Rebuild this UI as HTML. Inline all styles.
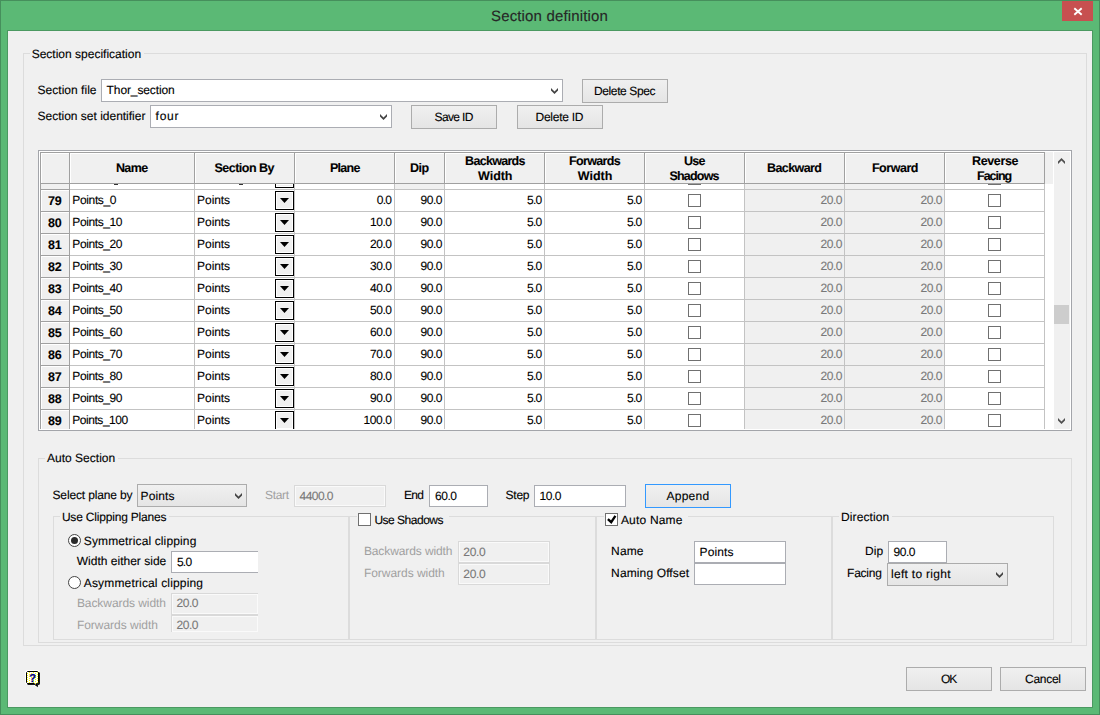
<!DOCTYPE html>
<html lang="en"><head><meta charset="utf-8"><title>Section definition</title>
<style>
html,body{margin:0;padding:0;}
body{width:1100px;height:715px;position:relative;overflow:hidden;background:#5bb975;font-family:"Liberation Sans", sans-serif;font-size:12px;}
.b{position:absolute;box-sizing:content-box;}
.t{position:absolute;white-space:nowrap;text-rendering:geometricPrecision;-webkit-text-stroke:0.12px currentColor;line-height:16px;font-size:12px;color:#000;}
</style></head>
<body>
<div class="b" style="left:0px;top:0px;width:1098px;height:713px;border:1px solid #468f5c;background:#5bb975;"></div>
<div class="b" style="left:7px;top:30px;width:1084px;height:676px;border:1px solid #4b9961;background:#f0f0f0;"></div>
<div class="b" style="left:1062px;top:1px;width:31px;height:20px;background:#c75050;"><svg width="31" height="20" viewBox="0 0 31 20" style="position:absolute;left:0;top:0"><path d="M12.3 7.2 L19.7 13.8 M19.7 7.2 L12.3 13.8" stroke="#fff" stroke-width="1.9" fill="none"/></svg></div>
<div class="b" style="left:23px;top:53px;width:1062px;height:591px;border:1px solid #dcdcdc;"></div>
<div class="b" style="left:38px;top:458px;width:1032px;height:183px;border:1px solid #dcdcdc;"></div>
<div class="b" style="left:53px;top:516px;width:294px;height:122px;border:1px solid #dcdcdc;"></div>
<div class="b" style="left:349px;top:516px;width:245px;height:122px;border:1px solid #dcdcdc;"></div>
<div class="b" style="left:596px;top:516px;width:234px;height:122px;border:1px solid #dcdcdc;"></div>
<div class="b" style="left:832px;top:516px;width:220px;height:122px;border:1px solid #dcdcdc;"></div>
<div class="b" style="left:30px;top:53px;width:114px;height:1px;background:#f0f0f0;"></div>
<div class="b" style="left:45px;top:458px;width:73px;height:1px;background:#f0f0f0;"></div>
<div class="b" style="left:60px;top:516px;width:109px;height:1px;background:#f0f0f0;"></div>
<div class="b" style="left:357px;top:516px;width:92px;height:1px;background:#f0f0f0;"></div>
<div class="b" style="left:604px;top:516px;width:84px;height:1px;background:#f0f0f0;"></div>
<div class="b" style="left:839px;top:516px;width:53px;height:1px;background:#f0f0f0;"></div>
<div class="b" style="left:101px;top:79px;width:460px;height:21px;border:1px solid #abadb3;background:#fff;"><svg width="7" height="6" viewBox="0 0 7 6" style="position:absolute;right:4px;top:8px"><path d="M0 0 L3.5 3.5 L7 0 L7 2.5 L3.5 6 L0 2.5 Z" fill="#444"/></svg></div>
<div class="b" style="left:150px;top:105px;width:240px;height:21px;border:1px solid #abadb3;background:#fff;"><svg width="7" height="6" viewBox="0 0 7 6" style="position:absolute;right:4px;top:8px"><path d="M0 0 L3.5 3.5 L7 0 L7 2.5 L3.5 6 L0 2.5 Z" fill="#444"/></svg></div>
<div class="b" style="left:582px;top:79px;width:84px;height:22px;border:1px solid #acacac;background:linear-gradient(#f0f0f0,#e5e5e5);"></div>
<div class="b" style="left:411px;top:105px;width:84px;height:22px;border:1px solid #acacac;background:linear-gradient(#f0f0f0,#e5e5e5);"></div>
<div class="b" style="left:517px;top:105px;width:84px;height:22px;border:1px solid #acacac;background:linear-gradient(#f0f0f0,#e5e5e5);"></div>
<div class="b" style="left:906px;top:667px;width:84px;height:22px;border:1px solid #acacac;background:linear-gradient(#f0f0f0,#e5e5e5);"></div>
<div class="b" style="left:1000px;top:667px;width:84px;height:22px;border:1px solid #acacac;background:linear-gradient(#f0f0f0,#e5e5e5);"></div>
<div class="b" style="left:645px;top:484px;width:84px;height:22px;border:1px solid #3399ff;background:linear-gradient(#f0f0f0,#e5e5e5);"></div>
<div class="b" style="left:137px;top:484px;width:108px;height:21px;border:1px solid #acacac;background:linear-gradient(#f0f0f0,#e5e5e5);"><svg width="7" height="6" viewBox="0 0 7 6" style="position:absolute;right:4px;top:8px"><path d="M0 0 L3.5 3.5 L7 0 L7 2.5 L3.5 6 L0 2.5 Z" fill="#444"/></svg></div>
<div class="b" style="left:887px;top:563px;width:119px;height:21px;border:1px solid #acacac;background:linear-gradient(#f0f0f0,#e5e5e5);"><svg width="7" height="6" viewBox="0 0 7 6" style="position:absolute;right:4px;top:8px"><path d="M0 0 L3.5 3.5 L7 0 L7 2.5 L3.5 6 L0 2.5 Z" fill="#444"/></svg></div>
<div class="b" style="left:294px;top:485px;width:90px;height:20px;border:1px solid #d9d9d9;background:#f0f0f0;box-shadow:inset 0 0 0 1px #fafafa;"></div>
<div class="b" style="left:429px;top:485px;width:57px;height:20px;border:1px solid #abadb3;background:#fff;"></div>
<div class="b" style="left:534px;top:485px;width:90px;height:20px;border:1px solid #abadb3;background:#fff;"></div>
<div class="b" style="left:171px;top:551px;width:86px;height:20px;border:1px solid #abadb3;background:#fff;border-right:none;"></div>
<div class="b" style="left:171px;top:593px;width:86px;height:20px;border:1px solid #d9d9d9;background:#f0f0f0;box-shadow:inset 0 0 0 1px #fafafa;border-right:none;"></div>
<div class="b" style="left:171px;top:615px;width:86px;height:16px;border:1px solid #d9d9d9;background:#f0f0f0;box-shadow:inset 0 0 0 1px #fafafa;border-right:none;border-bottom:none;"></div>
<div class="b" style="left:458px;top:541px;width:90px;height:20px;border:1px solid #d9d9d9;background:#f0f0f0;box-shadow:inset 0 0 0 1px #fafafa;"></div>
<div class="b" style="left:458px;top:563px;width:90px;height:20px;border:1px solid #d9d9d9;background:#f0f0f0;box-shadow:inset 0 0 0 1px #fafafa;"></div>
<div class="b" style="left:694px;top:541px;width:90px;height:20px;border:1px solid #abadb3;background:#fff;"></div>
<div class="b" style="left:694px;top:563px;width:90px;height:20px;border:1px solid #abadb3;background:#fff;"></div>
<div class="b" style="left:888px;top:541px;width:57px;height:20px;border:1px solid #abadb3;background:#fff;"></div>
<div class="b" style="left:358px;top:513px;width:11px;height:11px;border:1px solid #707070;background:#fff;"></div>
<div class="b" style="left:605px;top:513px;width:11px;height:11px;border:1px solid #707070;background:#fff;"><svg width="11" height="11" viewBox="0 0 11 11" style="position:absolute;left:0;top:0"><path d="M1.9 5.1 L5.2 8.2 L9.4 1.9" stroke="#000" stroke-width="2.3" fill="none"/></svg></div>
<div class="b" style="left:68px;top:534px;width:11px;height:11px;border:1px solid #444;border-radius:50%;background:#fff;"><div style="position:absolute;left:2px;top:2px;width:7px;height:7px;border-radius:50%;background:#2b2b2b"></div></div>
<div class="b" style="left:68px;top:576px;width:11px;height:11px;border:1px solid #444;border-radius:50%;background:#fff;"></div>
<div class="b" style="left:38px;top:150px;width:1032px;height:279px;border:1px solid #a3a5aa;background:#fff;"></div>
<div class="b" style="left:40px;top:152px;width:1013px;height:32px;background:#f0f0f0;"></div>
<div class="b" style="left:40px;top:184px;width:30px;height:245px;background:#f0f0f0;"></div>
<div class="b" style="left:745px;top:184px;width:199px;height:245px;background:#f0f0f0;"></div>
<div class="b" style="left:395px;top:184px;width:49px;height:5px;background:#f0f0f0;"></div>
<div class="b" style="left:1054px;top:152px;width:16px;height:277px;background:#f0f0f0;"></div>
<div class="b" style="left:1054px;top:305px;width:15px;height:19px;background:#cdcdcd;"></div>
<svg class="b" width="7" height="6" viewBox="0 0 7 6" style="left:1058px;top:158px"><path d="M0 6 L3.5 2.5 L7 6 L7 3.5 L3.5 0 L0 3.5 Z" fill="#505050"/></svg>
<svg class="b" width="7" height="6" viewBox="0 0 7 6" style="left:1058px;top:418px"><path d="M0 0 L3.5 3.5 L7 0 L7 2.5 L3.5 6 L0 2.5 Z" fill="#505050"/></svg>
<div class="b" style="left:40px;top:189px;width:1005px;height:1px;background:#c3c3c3;"></div>
<div class="b" style="left:40px;top:211px;width:1005px;height:1px;background:#c3c3c3;"></div>
<div class="b" style="left:40px;top:233px;width:1005px;height:1px;background:#c3c3c3;"></div>
<div class="b" style="left:40px;top:255px;width:1005px;height:1px;background:#c3c3c3;"></div>
<div class="b" style="left:40px;top:277px;width:1005px;height:1px;background:#c3c3c3;"></div>
<div class="b" style="left:40px;top:299px;width:1005px;height:1px;background:#c3c3c3;"></div>
<div class="b" style="left:40px;top:321px;width:1005px;height:1px;background:#c3c3c3;"></div>
<div class="b" style="left:40px;top:343px;width:1005px;height:1px;background:#c3c3c3;"></div>
<div class="b" style="left:40px;top:365px;width:1005px;height:1px;background:#c3c3c3;"></div>
<div class="b" style="left:40px;top:387px;width:1005px;height:1px;background:#c3c3c3;"></div>
<div class="b" style="left:40px;top:409px;width:1005px;height:1px;background:#c3c3c3;"></div>
<div class="b" style="left:40px;top:184px;width:1px;height:245px;background:#c3c3c3;"></div>
<div class="b" style="left:69px;top:184px;width:1px;height:245px;background:#c3c3c3;"></div>
<div class="b" style="left:194px;top:184px;width:1px;height:245px;background:#c3c3c3;"></div>
<div class="b" style="left:294px;top:184px;width:1px;height:245px;background:#c3c3c3;"></div>
<div class="b" style="left:394px;top:184px;width:1px;height:245px;background:#c3c3c3;"></div>
<div class="b" style="left:444px;top:184px;width:1px;height:245px;background:#c3c3c3;"></div>
<div class="b" style="left:544px;top:184px;width:1px;height:245px;background:#c3c3c3;"></div>
<div class="b" style="left:644px;top:184px;width:1px;height:245px;background:#c3c3c3;"></div>
<div class="b" style="left:744px;top:184px;width:1px;height:245px;background:#c3c3c3;"></div>
<div class="b" style="left:844px;top:184px;width:1px;height:245px;background:#c3c3c3;"></div>
<div class="b" style="left:944px;top:184px;width:1px;height:245px;background:#c3c3c3;"></div>
<div class="b" style="left:1044px;top:184px;width:1px;height:245px;background:#c3c3c3;"></div>
<div class="b" style="left:40px;top:152px;width:1005px;height:1px;background:#a0a0a0;"></div>
<div class="b" style="left:40px;top:183px;width:1005px;height:1px;background:#a0a0a0;"></div>
<div class="b" style="left:40px;top:152px;width:1px;height:32px;background:#a0a0a0;"></div>
<div class="b" style="left:69px;top:152px;width:1px;height:32px;background:#a0a0a0;"></div>
<div class="b" style="left:194px;top:152px;width:1px;height:32px;background:#a0a0a0;"></div>
<div class="b" style="left:294px;top:152px;width:1px;height:32px;background:#a0a0a0;"></div>
<div class="b" style="left:394px;top:152px;width:1px;height:32px;background:#a0a0a0;"></div>
<div class="b" style="left:444px;top:152px;width:1px;height:32px;background:#a0a0a0;"></div>
<div class="b" style="left:544px;top:152px;width:1px;height:32px;background:#a0a0a0;"></div>
<div class="b" style="left:644px;top:152px;width:1px;height:32px;background:#a0a0a0;"></div>
<div class="b" style="left:744px;top:152px;width:1px;height:32px;background:#a0a0a0;"></div>
<div class="b" style="left:844px;top:152px;width:1px;height:32px;background:#a0a0a0;"></div>
<div class="b" style="left:944px;top:152px;width:1px;height:32px;background:#a0a0a0;"></div>
<div class="b" style="left:1044px;top:152px;width:1px;height:32px;background:#a0a0a0;"></div>
<div class="b" style="left:41px;top:153px;width:28px;height:1px;background:#fff;"></div>
<div class="b" style="left:41px;top:153px;width:1px;height:30px;background:#fff;"></div>
<div class="b" style="left:70px;top:153px;width:124px;height:1px;background:#fff;"></div>
<div class="b" style="left:70px;top:153px;width:1px;height:30px;background:#fff;"></div>
<div class="b" style="left:195px;top:153px;width:99px;height:1px;background:#fff;"></div>
<div class="b" style="left:195px;top:153px;width:1px;height:30px;background:#fff;"></div>
<div class="b" style="left:295px;top:153px;width:99px;height:1px;background:#fff;"></div>
<div class="b" style="left:295px;top:153px;width:1px;height:30px;background:#fff;"></div>
<div class="b" style="left:395px;top:153px;width:49px;height:1px;background:#fff;"></div>
<div class="b" style="left:395px;top:153px;width:1px;height:30px;background:#fff;"></div>
<div class="b" style="left:445px;top:153px;width:99px;height:1px;background:#fff;"></div>
<div class="b" style="left:445px;top:153px;width:1px;height:30px;background:#fff;"></div>
<div class="b" style="left:545px;top:153px;width:99px;height:1px;background:#fff;"></div>
<div class="b" style="left:545px;top:153px;width:1px;height:30px;background:#fff;"></div>
<div class="b" style="left:645px;top:153px;width:99px;height:1px;background:#fff;"></div>
<div class="b" style="left:645px;top:153px;width:1px;height:30px;background:#fff;"></div>
<div class="b" style="left:745px;top:153px;width:99px;height:1px;background:#fff;"></div>
<div class="b" style="left:745px;top:153px;width:1px;height:30px;background:#fff;"></div>
<div class="b" style="left:845px;top:153px;width:99px;height:1px;background:#fff;"></div>
<div class="b" style="left:845px;top:153px;width:1px;height:30px;background:#fff;"></div>
<div class="b" style="left:945px;top:153px;width:99px;height:1px;background:#fff;"></div>
<div class="b" style="left:945px;top:153px;width:1px;height:30px;background:#fff;"></div>
<div class="b" style="left:40px;top:184px;width:1px;height:245px;background:#a0a0a0;"></div>
<div class="b" style="left:69px;top:184px;width:1px;height:245px;background:#a0a0a0;"></div>
<div class="b" style="left:40px;top:189px;width:30px;height:1px;background:#a0a0a0;"></div>
<div class="b" style="left:41px;top:190px;width:28px;height:1px;background:#fff;"></div>
<div class="b" style="left:41px;top:190px;width:1px;height:21px;background:#fff;"></div>
<div class="b" style="left:40px;top:211px;width:30px;height:1px;background:#a0a0a0;"></div>
<div class="b" style="left:41px;top:212px;width:28px;height:1px;background:#fff;"></div>
<div class="b" style="left:41px;top:212px;width:1px;height:21px;background:#fff;"></div>
<div class="b" style="left:40px;top:233px;width:30px;height:1px;background:#a0a0a0;"></div>
<div class="b" style="left:41px;top:234px;width:28px;height:1px;background:#fff;"></div>
<div class="b" style="left:41px;top:234px;width:1px;height:21px;background:#fff;"></div>
<div class="b" style="left:40px;top:255px;width:30px;height:1px;background:#a0a0a0;"></div>
<div class="b" style="left:41px;top:256px;width:28px;height:1px;background:#fff;"></div>
<div class="b" style="left:41px;top:256px;width:1px;height:21px;background:#fff;"></div>
<div class="b" style="left:40px;top:277px;width:30px;height:1px;background:#a0a0a0;"></div>
<div class="b" style="left:41px;top:278px;width:28px;height:1px;background:#fff;"></div>
<div class="b" style="left:41px;top:278px;width:1px;height:21px;background:#fff;"></div>
<div class="b" style="left:40px;top:299px;width:30px;height:1px;background:#a0a0a0;"></div>
<div class="b" style="left:41px;top:300px;width:28px;height:1px;background:#fff;"></div>
<div class="b" style="left:41px;top:300px;width:1px;height:21px;background:#fff;"></div>
<div class="b" style="left:40px;top:321px;width:30px;height:1px;background:#a0a0a0;"></div>
<div class="b" style="left:41px;top:322px;width:28px;height:1px;background:#fff;"></div>
<div class="b" style="left:41px;top:322px;width:1px;height:21px;background:#fff;"></div>
<div class="b" style="left:40px;top:343px;width:30px;height:1px;background:#a0a0a0;"></div>
<div class="b" style="left:41px;top:344px;width:28px;height:1px;background:#fff;"></div>
<div class="b" style="left:41px;top:344px;width:1px;height:21px;background:#fff;"></div>
<div class="b" style="left:40px;top:365px;width:30px;height:1px;background:#a0a0a0;"></div>
<div class="b" style="left:41px;top:366px;width:28px;height:1px;background:#fff;"></div>
<div class="b" style="left:41px;top:366px;width:1px;height:21px;background:#fff;"></div>
<div class="b" style="left:40px;top:387px;width:30px;height:1px;background:#a0a0a0;"></div>
<div class="b" style="left:41px;top:388px;width:28px;height:1px;background:#fff;"></div>
<div class="b" style="left:41px;top:388px;width:1px;height:21px;background:#fff;"></div>
<div class="b" style="left:40px;top:409px;width:30px;height:1px;background:#a0a0a0;"></div>
<div class="b" style="left:41px;top:410px;width:28px;height:1px;background:#fff;"></div>
<div class="b" style="left:41px;top:410px;width:1px;height:19px;background:#fff;"></div>
<div class="b" style="left:275px;top:184px;width:17px;height:3px;border:1px solid #000;border-top:none;background:#f0f0f0;box-shadow:inset 0 0 0 1px #fff;"></div>
<div class="b" style="left:688px;top:184px;width:11px;height:1px;border:1px solid #707070;border-top:none;height:0;"></div>
<div class="b" style="left:988px;top:184px;width:11px;height:1px;border:1px solid #707070;border-top:none;height:0;"></div>
<div class="b" style="left:275px;top:191px;width:17px;height:17px;border:1px solid #000;background:#f0f0f0;box-shadow:inset 0 0 0 1px #fff;"><svg width="9" height="5" viewBox="0 0 9 5" style="position:absolute;left:4px;top:6px"><path d="M0 0 H9 L4.5 5 Z" fill="#000"/></svg></div>
<div class="b" style="left:688px;top:194px;width:11px;height:11px;border:1px solid #707070;background:#fff;"></div>
<div class="b" style="left:988px;top:194px;width:11px;height:11px;border:1px solid #707070;background:#fff;"></div>
<div class="b" style="left:275px;top:213px;width:17px;height:17px;border:1px solid #000;background:#f0f0f0;box-shadow:inset 0 0 0 1px #fff;"><svg width="9" height="5" viewBox="0 0 9 5" style="position:absolute;left:4px;top:6px"><path d="M0 0 H9 L4.5 5 Z" fill="#000"/></svg></div>
<div class="b" style="left:688px;top:216px;width:11px;height:11px;border:1px solid #707070;background:#fff;"></div>
<div class="b" style="left:988px;top:216px;width:11px;height:11px;border:1px solid #707070;background:#fff;"></div>
<div class="b" style="left:275px;top:235px;width:17px;height:17px;border:1px solid #000;background:#f0f0f0;box-shadow:inset 0 0 0 1px #fff;"><svg width="9" height="5" viewBox="0 0 9 5" style="position:absolute;left:4px;top:6px"><path d="M0 0 H9 L4.5 5 Z" fill="#000"/></svg></div>
<div class="b" style="left:688px;top:238px;width:11px;height:11px;border:1px solid #707070;background:#fff;"></div>
<div class="b" style="left:988px;top:238px;width:11px;height:11px;border:1px solid #707070;background:#fff;"></div>
<div class="b" style="left:275px;top:257px;width:17px;height:17px;border:1px solid #000;background:#f0f0f0;box-shadow:inset 0 0 0 1px #fff;"><svg width="9" height="5" viewBox="0 0 9 5" style="position:absolute;left:4px;top:6px"><path d="M0 0 H9 L4.5 5 Z" fill="#000"/></svg></div>
<div class="b" style="left:688px;top:260px;width:11px;height:11px;border:1px solid #707070;background:#fff;"></div>
<div class="b" style="left:988px;top:260px;width:11px;height:11px;border:1px solid #707070;background:#fff;"></div>
<div class="b" style="left:275px;top:279px;width:17px;height:17px;border:1px solid #000;background:#f0f0f0;box-shadow:inset 0 0 0 1px #fff;"><svg width="9" height="5" viewBox="0 0 9 5" style="position:absolute;left:4px;top:6px"><path d="M0 0 H9 L4.5 5 Z" fill="#000"/></svg></div>
<div class="b" style="left:688px;top:282px;width:11px;height:11px;border:1px solid #707070;background:#fff;"></div>
<div class="b" style="left:988px;top:282px;width:11px;height:11px;border:1px solid #707070;background:#fff;"></div>
<div class="b" style="left:275px;top:301px;width:17px;height:17px;border:1px solid #000;background:#f0f0f0;box-shadow:inset 0 0 0 1px #fff;"><svg width="9" height="5" viewBox="0 0 9 5" style="position:absolute;left:4px;top:6px"><path d="M0 0 H9 L4.5 5 Z" fill="#000"/></svg></div>
<div class="b" style="left:688px;top:304px;width:11px;height:11px;border:1px solid #707070;background:#fff;"></div>
<div class="b" style="left:988px;top:304px;width:11px;height:11px;border:1px solid #707070;background:#fff;"></div>
<div class="b" style="left:275px;top:323px;width:17px;height:17px;border:1px solid #000;background:#f0f0f0;box-shadow:inset 0 0 0 1px #fff;"><svg width="9" height="5" viewBox="0 0 9 5" style="position:absolute;left:4px;top:6px"><path d="M0 0 H9 L4.5 5 Z" fill="#000"/></svg></div>
<div class="b" style="left:688px;top:326px;width:11px;height:11px;border:1px solid #707070;background:#fff;"></div>
<div class="b" style="left:988px;top:326px;width:11px;height:11px;border:1px solid #707070;background:#fff;"></div>
<div class="b" style="left:275px;top:345px;width:17px;height:17px;border:1px solid #000;background:#f0f0f0;box-shadow:inset 0 0 0 1px #fff;"><svg width="9" height="5" viewBox="0 0 9 5" style="position:absolute;left:4px;top:6px"><path d="M0 0 H9 L4.5 5 Z" fill="#000"/></svg></div>
<div class="b" style="left:688px;top:348px;width:11px;height:11px;border:1px solid #707070;background:#fff;"></div>
<div class="b" style="left:988px;top:348px;width:11px;height:11px;border:1px solid #707070;background:#fff;"></div>
<div class="b" style="left:275px;top:367px;width:17px;height:17px;border:1px solid #000;background:#f0f0f0;box-shadow:inset 0 0 0 1px #fff;"><svg width="9" height="5" viewBox="0 0 9 5" style="position:absolute;left:4px;top:6px"><path d="M0 0 H9 L4.5 5 Z" fill="#000"/></svg></div>
<div class="b" style="left:688px;top:370px;width:11px;height:11px;border:1px solid #707070;background:#fff;"></div>
<div class="b" style="left:988px;top:370px;width:11px;height:11px;border:1px solid #707070;background:#fff;"></div>
<div class="b" style="left:275px;top:389px;width:17px;height:17px;border:1px solid #000;background:#f0f0f0;box-shadow:inset 0 0 0 1px #fff;"><svg width="9" height="5" viewBox="0 0 9 5" style="position:absolute;left:4px;top:6px"><path d="M0 0 H9 L4.5 5 Z" fill="#000"/></svg></div>
<div class="b" style="left:688px;top:392px;width:11px;height:11px;border:1px solid #707070;background:#fff;"></div>
<div class="b" style="left:988px;top:392px;width:11px;height:11px;border:1px solid #707070;background:#fff;"></div>
<div class="b" style="left:275px;top:411px;width:17px;height:17px;border:1px solid #000;border-bottom:none;background:#f0f0f0;box-shadow:inset 0 0 0 1px #fff;"><svg width="9" height="5" viewBox="0 0 9 5" style="position:absolute;left:4px;top:6px"><path d="M0 0 H9 L4.5 5 Z" fill="#000"/></svg></div>
<div class="b" style="left:688px;top:414px;width:11px;height:11px;border:1px solid #707070;background:#fff;"></div>
<div class="b" style="left:988px;top:414px;width:11px;height:11px;border:1px solid #707070;background:#fff;"></div>
<div class="b" style="left:114px;top:184px;width:4px;height:1px;background:#333;"></div>
<div class="b" style="left:239px;top:184px;width:4px;height:1px;background:#333;"></div>
<svg class="b" width="18" height="20" viewBox="0 0 18 20" style="left:25px;top:670px">
<defs><pattern id="dots" width="4" height="2" patternUnits="userSpaceOnUse"><rect width="4" height="2" fill="#fff"/><rect x="0" y="0" width="1" height="1" fill="#ffff00"/><rect x="2" y="1" width="1" height="1" fill="#ffff00"/></pattern></defs>
<path d="M2.5 1.5 H12.5 L13.5 2.5 V12.5 L12.5 13.5 H11.5 V15.8 L9 13.5 H2.5 L1.5 12.5 V2.5 Z" fill="none" stroke="#fff" stroke-width="3" stroke-linejoin="round"/>
<path d="M3 2 H14 L15 3 V14 L14 15 H13 V17.3 L10 15 H3 L2 14 V3 Z" fill="#1a1a1a"/>
<path d="M2.5 1.5 H12.5 L13.5 2.5 V12.5 L12.5 13.5 H11.5 V15.8 L9 13.5 H2.5 L1.5 12.5 V2.5 Z" fill="url(#dots)" stroke="#000" stroke-width="1"/>
<text x="7.7" y="11.9" font-family="Liberation Sans, sans-serif" font-weight="bold" font-size="11" fill="#00008b" stroke="#00008b" stroke-width="0.3" text-anchor="middle">?</text>
</svg>
<span class="t" style="left:491.00px;top:7.00px;letter-spacing:0.150px;color:#262626;font-size:15px;line-height:19px;">Section definition</span>
<span class="t" style="left:37.60px;top:82.00px;letter-spacing:0.018px;">Section file</span>
<span class="t" style="left:106.60px;top:82.00px;letter-spacing:-0.106px;">Thor_section</span>
<span class="t" style="left:37.60px;top:108.00px;letter-spacing:-0.012px;">Section set identifier</span>
<span class="t" style="left:155.50px;top:108.00px;letter-spacing:0.807px;">four</span>
<span class="t" style="left:594.00px;top:83.00px;letter-spacing:-0.387px;">Delete Spec</span>
<span class="t" style="left:434.60px;top:109.00px;letter-spacing:-0.664px;">Save ID</span>
<span class="t" style="left:535.50px;top:109.00px;letter-spacing:-0.253px;">Delete ID</span>
<span class="t" style="left:115.90px;top:160.00px;letter-spacing:-0.615px;font-weight:bold;font-size:12.5px;">Name</span>
<span class="t" style="left:214.50px;top:160.00px;letter-spacing:-0.511px;font-weight:bold;font-size:12.5px;">Section By</span>
<span class="t" style="left:329.90px;top:160.00px;letter-spacing:-0.687px;font-weight:bold;font-size:12.5px;">Plane</span>
<span class="t" style="left:409.90px;top:160.00px;letter-spacing:-0.468px;font-weight:bold;font-size:12.5px;">Dip</span>
<span class="t" style="left:465.10px;top:153.00px;letter-spacing:-0.701px;font-weight:bold;font-size:12.5px;">Backwards</span>
<span class="t" style="left:478.10px;top:168.00px;letter-spacing:-0.049px;font-weight:bold;font-size:12.5px;">Width</span>
<span class="t" style="left:569.00px;top:153.00px;letter-spacing:-0.666px;font-weight:bold;font-size:12.5px;">Forwards</span>
<span class="t" style="left:577.80px;top:168.00px;letter-spacing:-0.024px;font-weight:bold;font-size:12.5px;">Width</span>
<span class="t" style="left:683.90px;top:153.00px;letter-spacing:-0.665px;font-weight:bold;font-size:12.5px;">Use</span>
<span class="t" style="left:669.50px;top:168.00px;letter-spacing:-0.812px;font-weight:bold;font-size:12.5px;">Shadows</span>
<span class="t" style="left:767.00px;top:160.00px;letter-spacing:-0.580px;font-weight:bold;font-size:12.5px;">Backward</span>
<span class="t" style="left:871.90px;top:160.00px;letter-spacing:-0.452px;font-weight:bold;font-size:12.5px;">Forward</span>
<span class="t" style="left:972.00px;top:153.00px;letter-spacing:-0.359px;font-weight:bold;font-size:12.5px;">Reverse</span>
<span class="t" style="left:977.10px;top:168.00px;letter-spacing:-1.057px;font-weight:bold;font-size:12.5px;">Facing</span>
<span class="t" style="left:48.00px;top:192.80px;letter-spacing:-0.104px;font-weight:bold;font-size:12.5px;">79</span>
<span class="t" style="left:72.30px;top:192.00px;letter-spacing:-0.357px;">Points_0</span>
<span class="t" style="left:197.10px;top:192.00px;letter-spacing:-0.070px;">Points</span>
<span class="t" style="left:376.80px;top:192.00px;letter-spacing:-0.741px;">0.0</span>
<span class="t" style="left:420.50px;top:192.00px;letter-spacing:-0.452px;">90.0</span>
<span class="t" style="left:527.00px;top:192.00px;letter-spacing:-0.741px;">5.0</span>
<span class="t" style="left:627.00px;top:192.00px;letter-spacing:-0.741px;">5.0</span>
<span class="t" style="left:820.50px;top:192.00px;letter-spacing:-0.452px;color:#787878;">20.0</span>
<span class="t" style="left:920.50px;top:192.00px;letter-spacing:-0.452px;color:#787878;">20.0</span>
<span class="t" style="left:48.00px;top:214.80px;letter-spacing:-0.104px;font-weight:bold;font-size:12.5px;">80</span>
<span class="t" style="left:72.30px;top:214.00px;letter-spacing:-0.397px;">Points_10</span>
<span class="t" style="left:197.10px;top:214.00px;letter-spacing:-0.070px;">Points</span>
<span class="t" style="left:370.00px;top:214.00px;letter-spacing:-0.452px;">10.0</span>
<span class="t" style="left:420.50px;top:214.00px;letter-spacing:-0.452px;">90.0</span>
<span class="t" style="left:527.00px;top:214.00px;letter-spacing:-0.741px;">5.0</span>
<span class="t" style="left:627.00px;top:214.00px;letter-spacing:-0.741px;">5.0</span>
<span class="t" style="left:820.50px;top:214.00px;letter-spacing:-0.452px;color:#787878;">20.0</span>
<span class="t" style="left:920.50px;top:214.00px;letter-spacing:-0.452px;color:#787878;">20.0</span>
<span class="t" style="left:48.00px;top:236.80px;letter-spacing:-0.104px;font-weight:bold;font-size:12.5px;">81</span>
<span class="t" style="left:72.30px;top:236.00px;letter-spacing:-0.397px;">Points_20</span>
<span class="t" style="left:197.10px;top:236.00px;letter-spacing:-0.070px;">Points</span>
<span class="t" style="left:370.00px;top:236.00px;letter-spacing:-0.452px;">20.0</span>
<span class="t" style="left:420.50px;top:236.00px;letter-spacing:-0.452px;">90.0</span>
<span class="t" style="left:527.00px;top:236.00px;letter-spacing:-0.741px;">5.0</span>
<span class="t" style="left:627.00px;top:236.00px;letter-spacing:-0.741px;">5.0</span>
<span class="t" style="left:820.50px;top:236.00px;letter-spacing:-0.452px;color:#787878;">20.0</span>
<span class="t" style="left:920.50px;top:236.00px;letter-spacing:-0.452px;color:#787878;">20.0</span>
<span class="t" style="left:48.00px;top:258.80px;letter-spacing:-0.104px;font-weight:bold;font-size:12.5px;">82</span>
<span class="t" style="left:72.30px;top:258.00px;letter-spacing:-0.397px;">Points_30</span>
<span class="t" style="left:197.10px;top:258.00px;letter-spacing:-0.070px;">Points</span>
<span class="t" style="left:370.00px;top:258.00px;letter-spacing:-0.452px;">30.0</span>
<span class="t" style="left:420.50px;top:258.00px;letter-spacing:-0.452px;">90.0</span>
<span class="t" style="left:527.00px;top:258.00px;letter-spacing:-0.741px;">5.0</span>
<span class="t" style="left:627.00px;top:258.00px;letter-spacing:-0.741px;">5.0</span>
<span class="t" style="left:820.50px;top:258.00px;letter-spacing:-0.452px;color:#787878;">20.0</span>
<span class="t" style="left:920.50px;top:258.00px;letter-spacing:-0.452px;color:#787878;">20.0</span>
<span class="t" style="left:48.00px;top:280.80px;letter-spacing:-0.104px;font-weight:bold;font-size:12.5px;">83</span>
<span class="t" style="left:72.30px;top:280.00px;letter-spacing:-0.397px;">Points_40</span>
<span class="t" style="left:197.10px;top:280.00px;letter-spacing:-0.070px;">Points</span>
<span class="t" style="left:370.00px;top:280.00px;letter-spacing:-0.452px;">40.0</span>
<span class="t" style="left:420.50px;top:280.00px;letter-spacing:-0.452px;">90.0</span>
<span class="t" style="left:527.00px;top:280.00px;letter-spacing:-0.741px;">5.0</span>
<span class="t" style="left:627.00px;top:280.00px;letter-spacing:-0.741px;">5.0</span>
<span class="t" style="left:820.50px;top:280.00px;letter-spacing:-0.452px;color:#787878;">20.0</span>
<span class="t" style="left:920.50px;top:280.00px;letter-spacing:-0.452px;color:#787878;">20.0</span>
<span class="t" style="left:48.00px;top:302.80px;letter-spacing:-0.104px;font-weight:bold;font-size:12.5px;">84</span>
<span class="t" style="left:72.30px;top:302.00px;letter-spacing:-0.397px;">Points_50</span>
<span class="t" style="left:197.10px;top:302.00px;letter-spacing:-0.070px;">Points</span>
<span class="t" style="left:370.00px;top:302.00px;letter-spacing:-0.452px;">50.0</span>
<span class="t" style="left:420.50px;top:302.00px;letter-spacing:-0.452px;">90.0</span>
<span class="t" style="left:527.00px;top:302.00px;letter-spacing:-0.741px;">5.0</span>
<span class="t" style="left:627.00px;top:302.00px;letter-spacing:-0.741px;">5.0</span>
<span class="t" style="left:820.50px;top:302.00px;letter-spacing:-0.452px;color:#787878;">20.0</span>
<span class="t" style="left:920.50px;top:302.00px;letter-spacing:-0.452px;color:#787878;">20.0</span>
<span class="t" style="left:48.00px;top:324.80px;letter-spacing:-0.104px;font-weight:bold;font-size:12.5px;">85</span>
<span class="t" style="left:72.30px;top:324.00px;letter-spacing:-0.397px;">Points_60</span>
<span class="t" style="left:197.10px;top:324.00px;letter-spacing:-0.070px;">Points</span>
<span class="t" style="left:370.00px;top:324.00px;letter-spacing:-0.452px;">60.0</span>
<span class="t" style="left:420.50px;top:324.00px;letter-spacing:-0.452px;">90.0</span>
<span class="t" style="left:527.00px;top:324.00px;letter-spacing:-0.741px;">5.0</span>
<span class="t" style="left:627.00px;top:324.00px;letter-spacing:-0.741px;">5.0</span>
<span class="t" style="left:820.50px;top:324.00px;letter-spacing:-0.452px;color:#787878;">20.0</span>
<span class="t" style="left:920.50px;top:324.00px;letter-spacing:-0.452px;color:#787878;">20.0</span>
<span class="t" style="left:48.00px;top:346.80px;letter-spacing:-0.104px;font-weight:bold;font-size:12.5px;">86</span>
<span class="t" style="left:72.30px;top:346.00px;letter-spacing:-0.397px;">Points_70</span>
<span class="t" style="left:197.10px;top:346.00px;letter-spacing:-0.070px;">Points</span>
<span class="t" style="left:370.00px;top:346.00px;letter-spacing:-0.452px;">70.0</span>
<span class="t" style="left:420.50px;top:346.00px;letter-spacing:-0.452px;">90.0</span>
<span class="t" style="left:527.00px;top:346.00px;letter-spacing:-0.741px;">5.0</span>
<span class="t" style="left:627.00px;top:346.00px;letter-spacing:-0.741px;">5.0</span>
<span class="t" style="left:820.50px;top:346.00px;letter-spacing:-0.452px;color:#787878;">20.0</span>
<span class="t" style="left:920.50px;top:346.00px;letter-spacing:-0.452px;color:#787878;">20.0</span>
<span class="t" style="left:48.00px;top:368.80px;letter-spacing:-0.104px;font-weight:bold;font-size:12.5px;">87</span>
<span class="t" style="left:72.30px;top:368.00px;letter-spacing:-0.397px;">Points_80</span>
<span class="t" style="left:197.10px;top:368.00px;letter-spacing:-0.070px;">Points</span>
<span class="t" style="left:370.00px;top:368.00px;letter-spacing:-0.452px;">80.0</span>
<span class="t" style="left:420.50px;top:368.00px;letter-spacing:-0.452px;">90.0</span>
<span class="t" style="left:527.00px;top:368.00px;letter-spacing:-0.741px;">5.0</span>
<span class="t" style="left:627.00px;top:368.00px;letter-spacing:-0.741px;">5.0</span>
<span class="t" style="left:820.50px;top:368.00px;letter-spacing:-0.452px;color:#787878;">20.0</span>
<span class="t" style="left:920.50px;top:368.00px;letter-spacing:-0.452px;color:#787878;">20.0</span>
<span class="t" style="left:48.00px;top:390.80px;letter-spacing:-0.104px;font-weight:bold;font-size:12.5px;">88</span>
<span class="t" style="left:72.30px;top:390.00px;letter-spacing:-0.397px;">Points_90</span>
<span class="t" style="left:197.10px;top:390.00px;letter-spacing:-0.070px;">Points</span>
<span class="t" style="left:370.00px;top:390.00px;letter-spacing:-0.452px;">90.0</span>
<span class="t" style="left:420.50px;top:390.00px;letter-spacing:-0.452px;">90.0</span>
<span class="t" style="left:527.00px;top:390.00px;letter-spacing:-0.741px;">5.0</span>
<span class="t" style="left:627.00px;top:390.00px;letter-spacing:-0.741px;">5.0</span>
<span class="t" style="left:820.50px;top:390.00px;letter-spacing:-0.452px;color:#787878;">20.0</span>
<span class="t" style="left:920.50px;top:390.00px;letter-spacing:-0.452px;color:#787878;">20.0</span>
<span class="t" style="left:48.00px;top:412.80px;letter-spacing:-0.104px;font-weight:bold;font-size:12.5px;">89</span>
<span class="t" style="left:72.30px;top:412.00px;letter-spacing:-0.461px;">Points_100</span>
<span class="t" style="left:197.10px;top:412.00px;letter-spacing:-0.070px;">Points</span>
<span class="t" style="left:363.40px;top:412.00px;letter-spacing:-0.357px;">100.0</span>
<span class="t" style="left:420.50px;top:412.00px;letter-spacing:-0.452px;">90.0</span>
<span class="t" style="left:527.00px;top:412.00px;letter-spacing:-0.741px;">5.0</span>
<span class="t" style="left:627.00px;top:412.00px;letter-spacing:-0.741px;">5.0</span>
<span class="t" style="left:820.50px;top:412.00px;letter-spacing:-0.452px;color:#787878;">20.0</span>
<span class="t" style="left:920.50px;top:412.00px;letter-spacing:-0.452px;color:#787878;">20.0</span>
<span class="t" style="left:52.50px;top:487.00px;letter-spacing:-0.147px;">Select plane by</span>
<span class="t" style="left:140.50px;top:488.00px;letter-spacing:0.130px;">Points</span>
<span class="t" style="left:265.10px;top:487.00px;letter-spacing:-0.335px;color:#a0a0a0;-webkit-text-stroke:0;">Start</span>
<span class="t" style="left:299.50px;top:488.00px;letter-spacing:-0.541px;color:#787878;">4400.0</span>
<span class="t" style="left:403.90px;top:487.00px;letter-spacing:-0.676px;">End</span>
<span class="t" style="left:435.10px;top:488.00px;letter-spacing:-0.518px;">60.0</span>
<span class="t" style="left:505.50px;top:487.00px;letter-spacing:-0.229px;">Step</span>
<span class="t" style="left:539.50px;top:488.00px;letter-spacing:-0.452px;">10.0</span>
<span class="t" style="left:666.50px;top:488.00px;letter-spacing:0.245px;">Append</span>
<span class="t" style="left:83.80px;top:532.50px;letter-spacing:0.130px;">Symmetrical clipping</span>
<span class="t" style="left:76.70px;top:552.50px;letter-spacing:0.014px;">Width either side</span>
<span class="t" style="left:176.90px;top:554.00px;letter-spacing:-0.741px;">5.0</span>
<span class="t" style="left:83.80px;top:575.00px;letter-spacing:0.158px;">Asymmetrical clipping</span>
<span class="t" style="left:76.90px;top:595.00px;letter-spacing:-0.067px;color:#a0a0a0;-webkit-text-stroke:0;">Backwards width</span>
<span class="t" style="left:176.50px;top:595.40px;letter-spacing:-0.452px;color:#787878;">20.0</span>
<span class="t" style="left:76.90px;top:617.00px;letter-spacing:-0.027px;color:#a0a0a0;-webkit-text-stroke:0;">Forwards width</span>
<span class="t" style="left:176.50px;top:617.40px;letter-spacing:-0.452px;color:#787878;">20.0</span>
<span class="t" style="left:363.90px;top:543.00px;letter-spacing:-0.103px;color:#a0a0a0;-webkit-text-stroke:0;">Backwards width</span>
<span class="t" style="left:463.30px;top:544.00px;letter-spacing:-0.285px;color:#787878;">20.0</span>
<span class="t" style="left:363.90px;top:565.00px;letter-spacing:-0.035px;color:#a0a0a0;-webkit-text-stroke:0;">Forwards width</span>
<span class="t" style="left:463.30px;top:566.00px;letter-spacing:-0.285px;color:#787878;">20.0</span>
<span class="t" style="left:611.10px;top:543.00px;letter-spacing:0.130px;">Name</span>
<span class="t" style="left:699.50px;top:544.00px;letter-spacing:0.130px;">Points</span>
<span class="t" style="left:611.10px;top:565.00px;letter-spacing:0.127px;">Naming Offset</span>
<span class="t" style="left:865.10px;top:543.00px;">Dip</span>
<span class="t" style="left:893.50px;top:544.00px;letter-spacing:-0.452px;">90.0</span>
<span class="t" style="left:847.10px;top:565.00px;letter-spacing:-0.244px;">Facing</span>
<span class="t" style="left:891.10px;top:566.00px;letter-spacing:0.281px;">left to right</span>
<span class="t" style="left:941.00px;top:671.00px;letter-spacing:-1.038px;">OK</span>
<span class="t" style="left:1025.00px;top:671.00px;letter-spacing:-0.271px;">Cancel</span>
<span class="t" style="left:31.70px;top:46.20px;">Section specification</span>
<span class="t" style="left:47.10px;top:450.30px;">Auto Section</span>
<span class="t" style="left:61.90px;top:509.00px;letter-spacing:-0.192px;">Use Clipping Planes</span>
<span class="t" style="left:374.40px;top:512.00px;letter-spacing:-0.494px;">Use Shadows</span>
<span class="t" style="left:620.90px;top:512.00px;letter-spacing:0.196px;">Auto Name</span>
<span class="t" style="left:841.10px;top:509.00px;letter-spacing:0.081px;">Direction</span>
</body></html>
